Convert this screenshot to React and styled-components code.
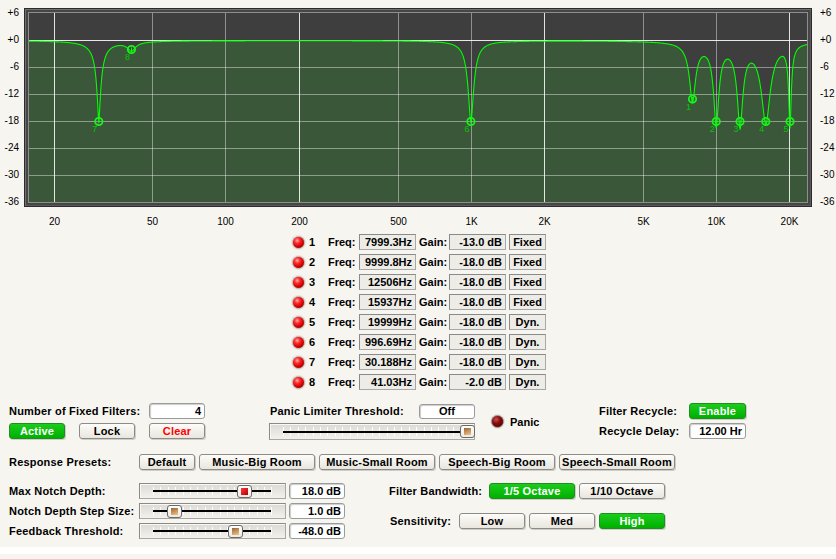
import React from "react";
import styled, { createGlobalStyle } from "styled-components";

const GlobalStyle = createGlobalStyle`
  html, body {
    margin: 0;
    padding: 0;
    background: #f7f5f0;
  }
  body {
    font-family: "Liberation Sans", Arial, sans-serif;
  }
`;

const Page = styled.div`
  width: 836px;
  height: 559px;
  overflow: hidden;
  background: #f7f5f0;
  color: #000;
  font-family: "Liberation Sans", Arial, sans-serif;
`;

/* ---------- graph ---------- */

const ChartRow = styled.div`
  display: flex;
  align-items: flex-start;
  padding-top: 8px;
`;

const YAxis = styled.div`
  width: ${({ right }) => (right ? 16 : 19)}px;
  margin: ${({ right }) => (right ? "-1px 0 -1px 8px" : "-1px 5px -1px 0")};
  height: 201px;
  display: flex;
  flex-direction: column;
  justify-content: space-between;
  font-size: 10px;
  line-height: 12px;
  text-align: ${({ right }) => (right ? "left" : "right")};
`;

const Frame = styled.div`
  border: 1px solid #2b2b2b;
  padding: 3px;
  background: #464646;
  box-shadow: inset 1px 1px 0 #707070, inset -1px -1px 0 #5a5a5a;
`;

const Plot = styled.div`
  border: 1px solid #8e8e8e;
  line-height: 0;

  svg {
    display: block;
  }
`;

const XAxis = styled.svg`
  display: block;
  font-family: "Liberation Sans", Arial, sans-serif;
  font-size: 10px;
`;

/* ---------- filter table ---------- */

const FilterList = styled.div`
  margin: 5px 0 0 292px;
  display: flex;
  flex-direction: column;
`;

const FilterRow = styled.div`
  display: grid;
  grid-template-columns: 14px 22px 31px 57px 33px 57px 40px;
  align-items: center;
  height: 20px;
  font-size: 11px;
  line-height: 14px;
  font-weight: bold;
`;

const Led = styled.span`
  box-sizing: border-box;
  width: 13px;
  height: 13px;
  border-radius: 50%;
  border: 1px solid ${({ dim }) => (dim ? "#8c8a86" : "#b4b0a8")};
  box-shadow: 0 0 0 1px #e6e3dc;
  background: ${({ dim }) =>
    dim
      ? "radial-gradient(circle at 38% 32%, #c85050 0, #8a0a0a 40%, #4a0000 100%)"
      : "radial-gradient(circle at 38% 32%, #ffb0b0 0, #ff2a2a 28%, #d00000 62%, #780000 100%)"};
`;

const Num = styled.span`
  padding-left: 3px;
`;

const Pad = styled.span`
  padding-left: ${({ left }) => left || 0}px;
`;

const ReadBox = styled.div`
  box-sizing: border-box;
  height: 16px;
  margin-left: ${({ offset }) => offset || 0}px;
  padding: 0 3px;
  border: 1px solid #a8a8a8;
  border-top-color: #8a8a8a;
  border-left-color: #8a8a8a;
  background: #edece7;
  line-height: 14px;
  text-align: ${({ center }) => (center ? "center" : "right")};
  white-space: nowrap;
`;

/* ---------- controls ---------- */

const Label = styled.span`
  display: inline-block;
  width: ${({ w }) => w}px;
  padding-left: ${({ indent }) => indent || 0}px;
  box-sizing: border-box;
  font-size: 11px;
  line-height: 14px;
  font-weight: bold;
  letter-spacing: 0.2px;
  white-space: nowrap;
`;

const Button = styled.button`
  box-sizing: border-box;
  width: ${({ w }) => w}px;
  height: 16px;
  padding: 0;
  border: 1px solid ${({ green }) => (green ? "#1f8f1f" : "#8d8b86")};
  border-radius: 3px;
  background: ${({ green }) =>
    green
      ? "linear-gradient(#1ccc1c, #00b000)"
      : "linear-gradient(#fdfcf9, #e8e6de)"};
  box-shadow: 1px 1px 0 rgba(0, 0, 0, 0.16);
  color: ${({ green, danger }) =>
    green ? "#fff" : danger ? "#ff0000" : "#000"};
  font: bold 11px/14px "Liberation Sans", Arial, sans-serif;
  letter-spacing: 0.2px;
  text-align: center;
  white-space: nowrap;
`;

const Field = styled.div`
  box-sizing: border-box;
  width: ${({ w }) => w}px;
  height: ${({ h }) => h || 16}px;
  margin-top: ${({ h }) => (h ? 16 - h : 0)}px;
  padding: 0 3px;
  border: 1px solid #9a9a9a;
  border-radius: 3px;
  background: #fff;
  box-shadow: inset 1px 1px 1px rgba(0, 0, 0, 0.2);
  font-size: 11px;
  font-weight: bold;
  line-height: ${({ h }) => (h || 16) - 2}px;
  text-align: ${({ center }) => (center ? "center" : "right")};
  white-space: nowrap;
`;

const Row = styled.div`
  display: flex;
  align-items: center;
  height: 16px;
  gap: ${({ gap }) => gap || 0}px;
  margin-top: ${({ top }) => top || 0}px;
`;

const Column = styled.div`
  display: flex;
  flex-direction: column;
  gap: ${({ gap }) => gap || 0}px;
  width: ${({ w }) => (w ? `${w}px` : "auto")};
  flex-shrink: 0;
`;

const ControlsTop = styled.div`
  display: flex;
  align-items: flex-start;
  height: 37px;
  margin-top: 11px;
  padding-left: 9px;
`;

const MiddleGroup = styled.div`
  display: flex;
  align-items: center;
  width: 330px;
  flex-shrink: 0;
`;

const PanicIndicator = styled.div`
  display: flex;
  align-items: center;
  gap: 6px;
  margin-left: 16px;
  font-size: 11px;
  font-weight: bold;
`;

const PresetsRow = styled(Row)`
  margin-top: 14px;
  padding-left: 9px;
`;

const BottomSection = styled.div`
  display: flex;
  margin-top: 13px;
  padding-left: 9px;
`;

const SliderTrack = styled.div`
  position: relative;
  box-sizing: border-box;
  flex-shrink: 0;
  width: ${({ w }) => w}px;
  height: ${({ h }) => h || 16}px;
  margin-right: ${({ gap }) => gap || 0}px;
  border: 1px solid #a9a7a2;
  border-top-color: #8c8a85;
  border-left-color: #8c8a85;
  background: linear-gradient(#dcdad4, #f2f1ec);
  box-shadow: inset 1px 1px 0 #f8f8f6;
`;

const Ticks = styled.div`
  position: absolute;
  left: 13px;
  right: 13px;
  top: 3px;
  bottom: 3px;
  background: repeating-linear-gradient(
    90deg,
    #ffffff 0 1px,
    transparent 1px 7.4px
  );
`;

const Rail = styled.div`
  position: absolute;
  left: 13px;
  right: 14px;
  top: 50%;
  height: 2px;
  margin-top: -1px;
  background: #000;
`;

const Thumb = styled.div`
  position: absolute;
  top: 1px;
  box-sizing: border-box;
  width: 15px;
  height: 13px;
  margin-left: -7.5px;
  display: flex;
  align-items: center;
  justify-content: center;
  border: 1px solid #6c6a66;
  border-radius: 3px;
  background: linear-gradient(#ffffff, #ebeae5);

  &::after {
    content: "";
    width: 7px;
    height: 7px;
    background: ${({ red }) =>
      red
        ? "linear-gradient(135deg, #ff3a3a, #b40000)"
        : "linear-gradient(160deg, #9a6630, #f2c38a)"};
  }
`;

const WhiteStrip = styled.div`
  height: 7px;
  margin-top: 8px;
  background: #ffffff;
`;

/* ---------- data ---------- */

const filters = [
  { n: 1, freq: "7999.3Hz", f: 7999.3, gain: "-13.0 dB", g: -13, mode: "Fixed", b: 3.8 },
  { n: 2, freq: "9999.8Hz", f: 9999.8, gain: "-18.0 dB", g: -18, mode: "Fixed", b: 3.2 },
  { n: 3, freq: "12506Hz", f: 12506, gain: "-18.0 dB", g: -18, mode: "Fixed", b: 3.5 },
  { n: 4, freq: "15937Hz", f: 15937, gain: "-18.0 dB", g: -18, mode: "Fixed", b: 5.5 },
  { n: 5, freq: "19999Hz", f: 19999, gain: "-18.0 dB", g: -18, mode: "Dyn.", b: 1.6 },
  { n: 6, freq: "996.69Hz", f: 996.69, gain: "-18.0 dB", g: -18, mode: "Dyn.", b: 3.5 },
  { n: 7, freq: "30.188Hz", f: 30.188, gain: "-18.0 dB", g: -18, mode: "Dyn.", b: 2.6, p: 1.5 },
  { n: 8, freq: "41.03Hz", f: 41.03, gain: "-2.0 dB", g: -2, mode: "Dyn.", b: 5 },
];

const yLabels = ["+6", "+0", "-6", "-12", "-18", "-24", "-30", "-36"];

// pixel columns of the frequency grid, in page coordinates
const xGrid = [
  { label: "20", col: 54, bright: true },
  { label: "50", col: 152 },
  { label: "100", col: 225 },
  { label: "200", col: 299, bright: true },
  { label: "500", col: 398 },
  { label: "1K", col: 471 },
  { label: "2K", col: 544, bright: true },
  { label: "5K", col: 643 },
  { label: "10K", col: 716 },
  { label: "20K", col: 789, bright: true },
];
const yGrid = [40, 67, 94, 121, 148, 175];

const PLOT_X = 29;
const PLOT_Y = 13;
const PLOT_W = 778;
const PLOT_H = 189;

const xOf = (f) => 55 + (Math.log10(f) - Math.log10(20)) * 245 - PLOT_X;
const yOf = (db) => (6 - db) * 4.5 + 0.5;

const responseAt = (x) =>
  filters.reduce((sum, { f, g, b, p = 1.8 }) => {
    const d = Math.abs(x - xOf(f));
    return sum + g / (1 + Math.pow(d / b, p));
  }, 0);

const curvePoints = (() => {
  const xs = [];
  for (let x = 0; x <= PLOT_W; x += 0.5) xs.push(x);
  filters.forEach(({ f }) => xs.push(xOf(f)));
  xs.sort((a, b) => a - b);
  return xs.map((x) => [x, Math.min(PLOT_H, yOf(responseAt(x)))]);
})();

const curvePath = curvePoints
  .map(([x, y], i) => `${i ? "L" : "M"}${x.toFixed(2)} ${y.toFixed(2)}`)
  .join(" ");
const fillPath = `M0 ${PLOT_H} ${curvePath.replace(/^M/, "L")} L${PLOT_W} ${PLOT_H} Z`;

const Graph = () => (
  <svg width={PLOT_W} height={PLOT_H} viewBox={`0 0 ${PLOT_W} ${PLOT_H}`}>
    <rect width={PLOT_W} height={PLOT_H} fill="#3e3e3e" />
    <path d={fillPath} fill="#3a573a" />
    {yGrid.map((row, i) => (
      <line
        key={row}
        x1="0"
        x2={PLOT_W}
        y1={row - PLOT_Y + 0.5}
        y2={row - PLOT_Y + 0.5}
        stroke={i === 0 ? "rgba(255,255,255,0.88)" : "rgba(255,255,255,0.42)"}
        strokeWidth="1"
        shapeRendering="crispEdges"
      />
    ))}
    {xGrid.map(({ col, bright }) => (
      <line
        key={col}
        x1={col - PLOT_X + 0.5}
        x2={col - PLOT_X + 0.5}
        y1="0"
        y2={PLOT_H}
        stroke={bright ? "rgba(255,255,255,0.85)" : "rgba(255,255,255,0.42)"}
        strokeWidth="1"
        shapeRendering="crispEdges"
      />
    ))}
    <path d={curvePath} fill="none" stroke="#00ff00" strokeWidth="1.1" />
    {filters.map(({ n, f, g }) => {
      const cx = xOf(f);
      const cy = yOf(g);
      return (
        <g key={n}>
          <circle cx={cx} cy={cy} r="3.7" fill="none" stroke="#1cf01c" strokeWidth="1.8" />
          <line x1={cx} x2={cx} y1={cy - 2} y2={cy + 2} stroke="#1cf01c" strokeWidth="1" />
          <text
            x={cx - 6.5}
            y={cy + 10.5}
            fontSize="9"
            fill="#00c800"
            fontFamily="Liberation Sans, Arial, sans-serif"
          >
            {n}
          </text>
        </g>
      );
    })}
  </svg>
);

const Slider = ({ w, h, value, red, gap }) => (
  <SliderTrack w={w} h={h} gap={gap}>
    <Ticks />
    <Rail />
    <Thumb red={red} style={{ left: 8.5 + value * (w - 17) }} />
  </SliderTrack>
);

const App = () => (
  <Page>
    <GlobalStyle />

    <ChartRow>
      <YAxis>
        {yLabels.map((l) => (
          <span key={l}>{l}</span>
        ))}
      </YAxis>
      <Frame>
        <Plot>
          <Graph />
        </Plot>
      </Frame>
      <YAxis right>
        {yLabels.map((l) => (
          <span key={l}>{l}</span>
        ))}
      </YAxis>
    </ChartRow>

    <XAxis width="836" height="20">
      {xGrid.map(({ label, col }) => (
        <text key={label} x={col + 0.5} y="18" textAnchor="middle" fill="#000">
          {label}
        </text>
      ))}
    </XAxis>

    <FilterList>
      {filters.map((flt) => (
        <FilterRow key={flt.n}>
          <Led />
          <Num>{flt.n}</Num>
          <span>Freq:</span>
          <ReadBox>{flt.freq}</ReadBox>
          <Pad left={3}>Gain:</Pad>
          <ReadBox>{flt.gain}</ReadBox>
          <ReadBox center offset={3}>
            {flt.mode}
          </ReadBox>
        </FilterRow>
      ))}
    </FilterList>

    <ControlsTop>
      <Column w={260} gap={4}>
        <Row>
          <Label w={140}>Number of Fixed Filters:</Label>
          <Field w={56}>4</Field>
        </Row>
        <Row gap={14}>
          <Button w={56} green>
            Active
          </Button>
          <Button w={56}>Lock</Button>
          <Button w={56} danger>
            Clear
          </Button>
        </Row>
      </Column>

      <MiddleGroup>
        <Column w={206} gap={4}>
          <Row>
            <Label w={150} indent={1}>
              Panic Limiter Threshold:
            </Label>
            <Field w={56} h={15} center>
              Off
            </Field>
          </Row>
          <Slider w={206} h={17} value={1} />
        </Column>
        <PanicIndicator>
          <Led dim />
          <span>Panic</span>
        </PanicIndicator>
      </MiddleGroup>

      <Column gap={4}>
        <Row>
          <Label w={90}>Filter Recycle:</Label>
          <Button w={57} green>
            Enable
          </Button>
        </Row>
        <Row>
          <Label w={90}>Recycle Delay:</Label>
          <Field w={57}>12.00 Hr</Field>
        </Row>
      </Column>
    </ControlsTop>

    <PresetsRow gap={4}>
      <Label w={126}>Response Presets:</Label>
      <Button w={56}>Default</Button>
      <Button w={116}>Music-Big Room</Button>
      <Button w={116}>Music-Small Room</Button>
      <Button w={116}>Speech-Big Room</Button>
      <Button w={116}>Speech-Small Room</Button>
    </PresetsRow>

    <BottomSection>
      <Column w={380} gap={4}>
        <Row>
          <Label w={130}>Max Notch Depth:</Label>
          <Slider w={147} value={0.742} red gap={3} />
          <Field w={56}>18.0 dB</Field>
        </Row>
        <Row>
          <Label w={130}>Notch Depth Step Size:</Label>
          <Slider w={147} value={0.198} gap={3} />
          <Field w={56}>1.0 dB</Field>
        </Row>
        <Row>
          <Label w={130}>Feedback Threshold:</Label>
          <Slider w={147} value={0.669} gap={3} />
          <Field w={56}>-48.0 dB</Field>
        </Row>
      </Column>

      <Column>
        <Row gap={4}>
          <Label w={96}>Filter Bandwidth:</Label>
          <Button w={86} green>
            1/5 Octave
          </Button>
          <Button w={86}>1/10 Octave</Button>
        </Row>
        <Row gap={4} top={14}>
          <Label w={66} indent={1}>
            Sensitivity:
          </Label>
          <Button w={66}>Low</Button>
          <Button w={66}>Med</Button>
          <Button w={66} green>
            High
          </Button>
        </Row>
      </Column>
    </BottomSection>

    <WhiteStrip />
  </Page>
);

export default App;
